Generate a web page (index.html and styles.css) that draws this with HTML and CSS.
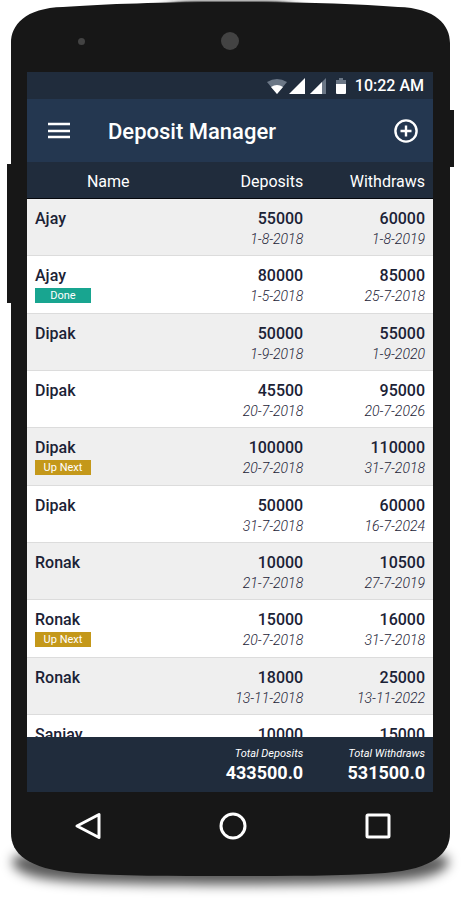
FILE: index.html
```html
<!DOCTYPE html>
<html lang="en">
<head>
    <meta charset="UTF-8">
    <meta name="viewport" content="width=device-width, initial-scale=1.0">
    <title>Deposit Manager</title>
    <link rel="stylesheet" href="styles.css">
</head>
<body>
    <div class="phone">
        <span class="side-button side-left"></span>
        <span class="side-button side-right"></span>

        <div class="phone-top">
            <svg class="shell" viewBox="0 0 439 70" preserveAspectRatio="none" aria-hidden="true">
                <defs>
                    <filter id="glow" x="-20%" y="-300%" width="140%" height="700%"><feGaussianBlur stdDeviation="10 1"/></filter>
                </defs>
                <rect x="165" y="-1" width="110" height="3" fill="#222" filter="url(#glow)"/>
                <path d="M0 71V41C0 23 14 6 52 5C95 2 150 0 219.500 0S344 2 387 5C425 6 439 23 439 41V71Z" fill="#171717"/>
            </svg>
            <span class="sensor"></span>
            <span class="camera"></span>
        </div>

        <div class="screen">
            <div class="status-bar">
                <svg class="status-icons" width="80" height="18" viewBox="0 0 80 18" aria-hidden="true">
                    <path d="M0 5Q10-1 20 5L10 17Z" fill="#6b7786"/>
                    <path d="M4 10Q10 6 16 10L10 17Z" fill="#fff"/>
                    <path d="M22 17L38 1V17Z" fill="#fff"/>
                    <path d="M43 17L59 1V17Z" fill="#6b7786"/>
                    <path d="M43 17L55 5V17Z" fill="#fff"/>
                    <path d="M69 7V3H72V1H76V3H79V7Z" fill="#6b7786"/>
                    <path d="M69 7H79V16Q79 17 78 17H70Q69 17 69 16Z" fill="#fff"/>
                </svg>
                <span class="clock">10:22 AM</span>
            </div>

            <header class="app-bar">
                <button class="icon-btn" type="button" aria-label="Menu">
                    <svg width="24" height="24" viewBox="0 0 24 24"><path d="M1 5H23M1 12H23M1 18H23" stroke="#fff" stroke-width="2.400" fill="none"/></svg>
                </button>
                <h1>Deposit Manager</h1>
                <button class="icon-btn" type="button" aria-label="Add deposit">
                    <svg width="24" height="24" viewBox="0 0 24 24" fill="none" stroke="#fff" stroke-width="2.400"><circle cx="12" cy="12" r="10.600"/><path d="M12 6.500V17.500M6.500 12H17.500"/></svg>
                </button>
            </header>

            <div class="list">
                <table>
                    <thead>
                        <tr><th class="name-head" scope="col">Name</th><th scope="col">Deposits</th><th scope="col">Withdraws</th></tr>
                    </thead>
                    <tbody>
                        <tr>
                            <td class="name">Ajay</td>
                            <td><b>55000</b><i>1-8-2018</i></td>
                            <td><b>60000</b><i>1-8-2019</i></td>
                        </tr>
                        <tr>
                            <td class="name">Ajay<span class="badge done">Done</span></td>
                            <td><b>80000</b><i>1-5-2018</i></td>
                            <td><b>85000</b><i>25-7-2018</i></td>
                        </tr>
                        <tr>
                            <td class="name">Dipak</td>
                            <td><b>50000</b><i>1-9-2018</i></td>
                            <td><b>55000</b><i>1-9-2020</i></td>
                        </tr>
                        <tr>
                            <td class="name">Dipak</td>
                            <td><b>45500</b><i>20-7-2018</i></td>
                            <td><b>95000</b><i>20-7-2026</i></td>
                        </tr>
                        <tr>
                            <td class="name">Dipak<span class="badge next">Up Next</span></td>
                            <td><b>100000</b><i>20-7-2018</i></td>
                            <td><b>110000</b><i>31-7-2018</i></td>
                        </tr>
                        <tr>
                            <td class="name">Dipak</td>
                            <td><b>50000</b><i>31-7-2018</i></td>
                            <td><b>60000</b><i>16-7-2024</i></td>
                        </tr>
                        <tr>
                            <td class="name">Ronak</td>
                            <td><b>10000</b><i>21-7-2018</i></td>
                            <td><b>10500</b><i>27-7-2019</i></td>
                        </tr>
                        <tr>
                            <td class="name">Ronak<span class="badge next">Up Next</span></td>
                            <td><b>15000</b><i>20-7-2018</i></td>
                            <td><b>16000</b><i>31-7-2018</i></td>
                        </tr>
                        <tr>
                            <td class="name">Ronak</td>
                            <td><b>18000</b><i>13-11-2018</i></td>
                            <td><b>25000</b><i>13-11-2022</i></td>
                        </tr>
                        <tr>
                            <td class="name">Sanjay</td>
                            <td><b>10000</b></td>
                            <td><b>15000</b></td>
                        </tr>
                    </tbody>
                    <tfoot>
                        <tr>
                            <td></td>
                            <td><i>Total Deposits</i><b>433500.0</b></td>
                            <td><i>Total Withdraws</i><b>531500.0</b></td>
                        </tr>
                    </tfoot>
                </table>
            </div>
        </div>

        <nav class="phone-bottom">
            <svg class="shell" viewBox="0 0 439 83" preserveAspectRatio="none" aria-hidden="true">
                <defs>
                    <filter id="shadow" x="-10%" y="-60%" width="120%" height="240%"><feGaussianBlur stdDeviation="6"/></filter>
                </defs>
                <path d="M6 62H433C446 72 430 85 385 88C330 93 109 93 54 88C9 85-7 72 6 62Z" fill="#000" fill-opacity=".65" filter="url(#shadow)"/>
                <path d="M0-1V40C0 60 16 76 65 80C110 83 160 83 219.500 83S329 83 374 80C423 76 439 60 439 40V-1Z" fill="#171717"/>
            </svg>
            <button class="nav-btn" type="button" aria-label="Back">
                <svg width="28" height="28" viewBox="0 0 28 28"><path d="M25 2.500V25.500L3 14Z"/></svg>
            </button>
            <button class="nav-btn" type="button" aria-label="Home">
                <svg width="28" height="28" viewBox="0 0 28 28"><circle cx="14" cy="14" r="12"/></svg>
            </button>
            <button class="nav-btn" type="button" aria-label="Recent apps">
                <svg width="28" height="28" viewBox="0 0 28 28"><rect x="3" y="3" width="22" height="22" rx="1"/></svg>
            </button>
        </nav>
    </div>
</body>
</html>
```

FILE: styles.css
```css
* {
    box-sizing: border-box;
}

body {
    margin: 0;
    padding: 2px 14px 24px 11px;
    height: 100vh;
    overflow: hidden;
    background-color: #fff;
    font-family: Roboto, "Liberation Sans", sans-serif;
    color: #1b2236;
}

button {
    display: flex;
    padding: 0;
    border: none;
    background: none;
    cursor: pointer;
}

.phone {
    position: relative;
    display: flex;
    flex-direction: column;
    height: 100%;
}

.side-button {
    position: absolute;
    width: 4px;
    background-color: #171717;
}

.side-left {
    left: -4px;
    top: 162px;
    height: 139px;
}

.side-right {
    right: -4px;
    top: 108px;
    height: 57px;
}

/* Curved shell drawn behind the top and bottom bezels */
.shell {
    position: absolute;
    inset: 0;
    width: 100%;
    height: 100%;
    overflow: visible;
}

.phone-top {
    position: relative;
    display: grid;
    grid-template-columns: 32% 36% 32%;
    align-items: center;
    justify-items: center;
    height: 70px;
    padding-top: 8px;
}

.sensor,
.camera {
    position: relative;
    border-radius: 50%;
    background-color: #434343;
}

.sensor {
    width: 7px;
    height: 7px;
}

.camera {
    width: 18px;
    height: 18px;
}

.screen {
    position: relative;
    flex: 1;
    min-height: 0;
    display: flex;
    flex-direction: column;
    border: solid #171717;
    border-width: 0 17px 0 16px;
    background-color: #fff;
}

.status-bar {
    display: flex;
    align-items: center;
    justify-content: flex-end;
    gap: 8px;
    height: 27px;
    padding-right: 9px;
    background-color: #202c3c;
    color: #fff;
}

.clock {
    font-size: 16px;
    font-weight: 500;
}

.app-bar {
    display: flex;
    align-items: center;
    height: 63px;
    padding: 0 15px 0 20px;
    background-color: #243750;
    color: #fff;
}

.app-bar h1 {
    flex: 1;
    margin: 0;
    padding: 2px 0 0 37px;
    font-size: 22px;
    font-weight: 500;
}

.list {
    flex: 1;
    min-height: 0;
    overflow-y: auto;
    scrollbar-width: none;
}

table {
    width: 100%;
    table-layout: fixed;
    border-spacing: 0;
}

th {
    position: sticky;
    top: 0;
    width: 30%;
    height: 37px;
    padding: 2px 8px 0;
    border-bottom: 1px solid #05070c;
    background-color: #202c3c;
    color: #fff;
    font-size: 16px;
    font-weight: 400;
    text-align: right;
}

.name-head {
    width: 40%;
    text-align: center;
}

td {
    padding: 10px 8px 6px;
    border-bottom: 1px solid #dcdcdc;
    text-align: right;
    vertical-align: top;
}

tbody tr:nth-child(odd) {
    background-color: #efefef;
}

td b,
td i {
    display: block;
    line-height: 20px;
}

td b {
    font-size: 16px;
    font-weight: 500;
}

td i {
    font-size: 14px;
    font-weight: 300;
}

.name {
    text-align: left;
    font-size: 16px;
    font-weight: 500;
    line-height: 20px;
}

.badge {
    display: block;
    width: 56px;
    margin: 2px 0 4px;
    color: #fff;
    font-size: 11px;
    font-weight: 400;
    line-height: 15px;
    text-align: center;
}

.done {
    background-color: #18a590;
}

.next {
    background-color: #c4981a;
}

tfoot td {
    position: sticky;
    bottom: 0;
    height: 56px;
    padding-top: 9px;
    border-bottom: none;
    background-color: #202c3c;
    color: #fff;
}

tfoot td i {
    font-size: 11px;
    font-weight: 400;
    line-height: 15px;
}

tfoot td b {
    font-size: 18px;
    font-weight: 700;
    line-height: 24px;
}

.phone-bottom {
    position: relative;
    display: flex;
    align-items: center;
    justify-content: space-between;
    height: 83px;
    padding: 0 58px 18px 63px;
}

.nav-btn {
    position: relative;
}

.nav-btn svg {
    fill: none;
    stroke: #fff;
    stroke-width: 3;
    stroke-linejoin: round;
}
```
